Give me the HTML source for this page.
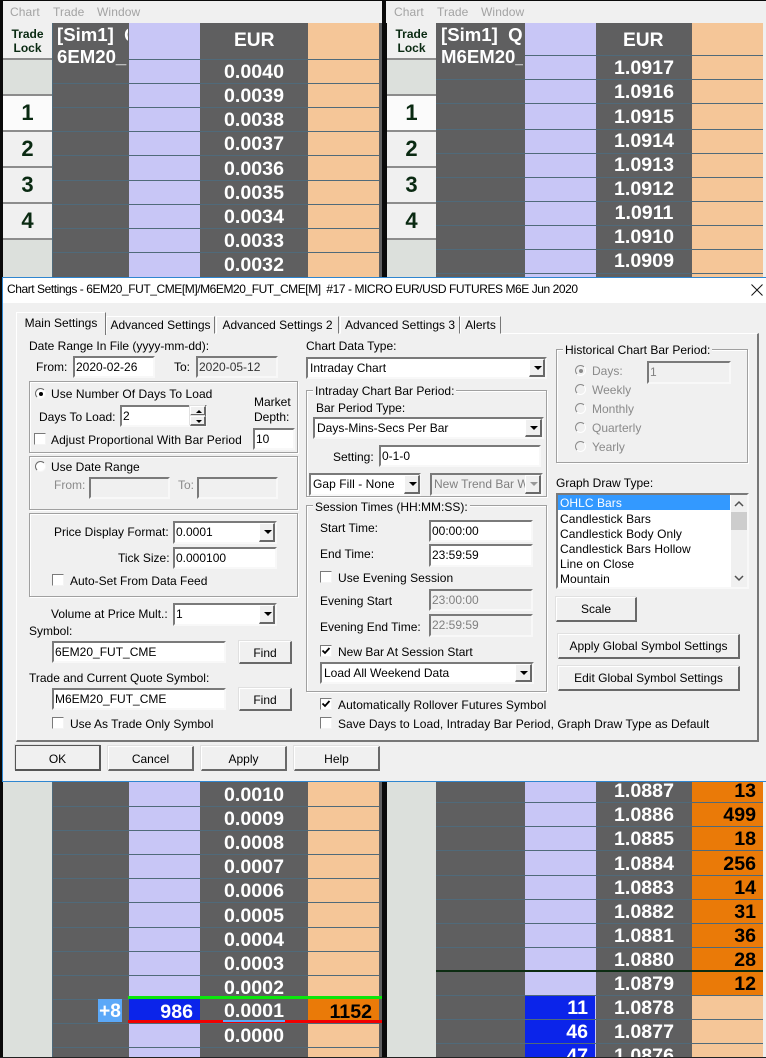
<!DOCTYPE html>
<html><head><meta charset="utf-8"><title>Chart Settings</title>
<style>
html,body{margin:0;padding:0;background:#0a0a0a;width:766px;height:1058px;overflow:hidden}
#r{position:relative;width:766px;height:1058px;overflow:hidden;font-family:"Liberation Sans",sans-serif;font-size:12px;color:#000}
#r div,#r span,#r b,#r i,#r svg{position:absolute;display:block;box-sizing:border-box}
.t{white-space:nowrap;line-height:14px;height:14px}
.w{letter-spacing:.06px}
.g{color:#8a8a8a}
.m{top:5px;color:#a3a3a3;font-size:12px;line-height:14px;letter-spacing:.1px;white-space:nowrap}
.tl{background:#f0f0f0;border-top:2px solid #8c8c8c}
.tlb{background:#dce0dc;border-top:2px solid #8c8c8c}
.n{font-weight:bold;font-size:22px;line-height:26px;color:#0a2a12;text-align:center;width:49px}
.l{height:1px;background:#506a7a}
.p{font-weight:bold;font-size:19.6px;line-height:26px;height:24px;color:#fff;text-align:center;width:100px;white-space:nowrap}
.h{font-weight:bold;font-size:19.2px;line-height:24px;color:#fff;white-space:nowrap}
.q{font-weight:bold;font-size:19.6px;line-height:26px;height:24px;text-align:right;white-space:nowrap}
.i{background:#fff;border:2px solid;border-color:#7a7a7a #f8f8f8 #f8f8f8 #7a7a7a;line-height:19px;padding-left:1px;white-space:nowrap;overflow:hidden}
.d{background:#f0f0f0;color:#808080}
.a{background:#f0f0f0;border:1px solid;border-color:#fff #696969 #696969 #fff;border-right-width:2px;border-bottom-width:2px}
.a:after{content:"";position:absolute;left:4px;top:6px;border:4px solid transparent;border-top:4px solid #000;border-bottom:0}
.ad:after{border-top-color:#999}
.gp{border:1px solid #a0a0a0;box-shadow:1px 1px 0 #fff,inset 1px 1px 0 #fff}
.lg{background:#f0f0f0;white-space:nowrap;line-height:14px;height:14px;padding:0 2px}
.b{background:#f0f0f0;border:1px solid;border-color:#fff #696969 #696969 #fff;border-right-width:2px;border-bottom-width:2px;box-shadow:-1px -1px 0 #e0e0e0;text-align:center;line-height:22px;white-space:nowrap}
.c{width:12px;height:12px;background:#fff;border:1px solid;border-color:#7a7a7a #f4f4f4 #f4f4f4 #7a7a7a}
.rd{width:11px;height:11px;border-radius:50%;background:#fff;border:1px solid;border-color:#6a6a6a #f6f6f6 #f6f6f6 #6a6a6a}
.rdd{background:#f0f0f0;border-color:#8a8a8a #fff #fff #8a8a8a}
.dot{left:3px;top:3px;width:4px;height:4px;border-radius:50%;background:#000}
.tab{background:#f0f0f0;border:1px solid;border-color:#fff #777 #f0f0f0 #fff;text-align:center;line-height:18px;white-space:nowrap}
.li{left:560px;white-space:nowrap;line-height:15px;height:15px;letter-spacing:.06px}
</style></head><body><div id="r">

<!-- left window -->
<div style="left:3px;top:1px;width:379px;height:22px;background:#f0f0f0"></div>
<div class="m" style="left:10px">Chart</div><div class="m" style="left:53px">Trade</div><div class="m" style="left:97px">Window</div>
<div style="left:3px;top:23px;width:49px;height:36px;background:#f0f0f0"></div>
<div class="t" style="left:3px;top:27px;width:49px;text-align:center;font-weight:bold;color:#0a2a12">Trade</div>
<div class="t" style="left:3px;top:41px;width:49px;text-align:center;font-weight:bold;color:#0a2a12">Lock</div>
<div class="tlb" style="left:3px;top:58px;width:49px;height:37px"></div>
<div class="tl" style="left:3px;top:94px;width:49px;height:37px;background:#fbfbfb"></div>
<div class="tl" style="left:3px;top:130px;width:49px;height:37px"></div>
<div class="tl" style="left:3px;top:166px;width:49px;height:37px"></div>
<div class="tl" style="left:3px;top:202px;width:49px;height:37px"></div>
<div class="tlb" style="left:3px;top:238px;width:49px;height:39px"></div>
<div class="n" style="left:3px;top:100px">1</div><div class="n" style="left:3px;top:136px">2</div><div class="n" style="left:3px;top:172px">3</div><div class="n" style="left:3px;top:208px">4</div>
<div style="left:52px;top:23px;width:77px;height:254px;background:#5f5f60;border-left:1px solid #506a7a"></div>
<div style="left:129px;top:23px;width:71px;height:254px;background:#c8c6f6"></div>
<div style="left:200px;top:23px;width:108px;height:254px;background:#5f5f60"></div>
<div style="left:308px;top:23px;width:71px;height:254px;background:#f5c698"></div>
<div style="left:379px;top:23px;width:3px;height:254px;background:#5f5f60"></div>
<div class="l" style="left:53px;width:326px;top:83px"></div><div class="l" style="left:53px;width:326px;top:107px"></div><div class="l" style="left:53px;width:326px;top:131px"></div><div class="l" style="left:53px;width:326px;top:155px"></div><div class="l" style="left:53px;width:326px;top:180px"></div><div class="l" style="left:53px;width:326px;top:204px"></div><div class="l" style="left:53px;width:326px;top:228px"></div><div class="l" style="left:53px;width:326px;top:252px"></div>
<div class="l" style="left:129px;width:250px;top:59px"></div>
<div style="left:53px;top:24px;width:75px;height:50px;overflow:hidden"><div class="h" style="left:4px;top:0;font-size:18.6px;line-height:22px">[Sim1]&nbsp; Q<br>6EM20_</div></div>
<div class="h" style="left:234px;top:29px">EUR</div>
<div class="p" style="left:204px;top:59px">0.0040</div><div class="p" style="left:204px;top:83px">0.0039</div><div class="p" style="left:204px;top:107px">0.0038</div><div class="p" style="left:204px;top:131px">0.0037</div><div class="p" style="left:204px;top:156px">0.0036</div><div class="p" style="left:204px;top:180px">0.0035</div><div class="p" style="left:204px;top:204px">0.0034</div><div class="p" style="left:204px;top:228px">0.0033</div><div class="p" style="left:204px;top:252px">0.0032</div>

<!-- right window -->
<div style="left:386px;top:1px;width:380px;height:22px;background:#f0f0f0"></div>
<div class="m" style="left:394px">Chart</div><div class="m" style="left:437px">Trade</div><div class="m" style="left:481px">Window</div>
<div style="left:387px;top:23px;width:49px;height:36px;background:#f0f0f0"></div>
<div class="t" style="left:387px;top:27px;width:49px;text-align:center;font-weight:bold;color:#0a2a12">Trade</div>
<div class="t" style="left:387px;top:41px;width:49px;text-align:center;font-weight:bold;color:#0a2a12">Lock</div>
<div class="tlb" style="left:387px;top:58px;width:49px;height:37px"></div>
<div class="tl" style="left:387px;top:94px;width:49px;height:37px;background:#fbfbfb"></div>
<div class="tl" style="left:387px;top:130px;width:49px;height:37px"></div>
<div class="tl" style="left:387px;top:166px;width:49px;height:37px"></div>
<div class="tl" style="left:387px;top:202px;width:49px;height:37px"></div>
<div class="tlb" style="left:387px;top:238px;width:49px;height:39px"></div>
<div class="n" style="left:387px;top:100px">1</div><div class="n" style="left:387px;top:136px">2</div><div class="n" style="left:387px;top:172px">3</div><div class="n" style="left:387px;top:208px">4</div>
<div style="left:436px;top:23px;width:89px;height:254px;background:#5f5f60"></div>
<div style="left:525px;top:23px;width:71px;height:254px;background:#c8c6f6"></div>
<div style="left:596px;top:23px;width:96px;height:254px;background:#5f5f60"></div>
<div style="left:692px;top:23px;width:71px;height:254px;background:#f5c698"></div>
<div style="left:763px;top:23px;width:3px;height:254px;background:#f0f0f0"></div>
<div class="l" style="left:436px;width:327px;top:79px"></div><div class="l" style="left:436px;width:327px;top:103px"></div><div class="l" style="left:436px;width:327px;top:129px"></div><div class="l" style="left:436px;width:327px;top:153px"></div><div class="l" style="left:436px;width:327px;top:177px"></div><div class="l" style="left:436px;width:327px;top:201px"></div><div class="l" style="left:436px;width:327px;top:225px"></div><div class="l" style="left:436px;width:327px;top:249px"></div><div class="l" style="left:436px;width:327px;top:273px"></div>
<div class="l" style="left:525px;width:238px;top:55px"></div>
<div style="left:437px;top:24px;width:86px;height:50px;overflow:hidden"><div class="h" style="left:4px;top:0;font-size:18.6px;line-height:22px">[Sim1]&nbsp; Q<br>M6EM20_</div></div>
<div class="h" style="left:623px;top:29px">EUR</div>
<div class="p" style="left:594px;top:55px">1.0917</div><div class="p" style="left:594px;top:79px">1.0916</div><div class="p" style="left:594px;top:104px">1.0915</div><div class="p" style="left:594px;top:128px">1.0914</div><div class="p" style="left:594px;top:152px">1.0913</div><div class="p" style="left:594px;top:176px">1.0912</div><div class="p" style="left:594px;top:200px">1.0911</div><div class="p" style="left:594px;top:224px">1.0910</div><div class="p" style="left:594px;top:248px">1.0909</div>

<!-- bottom left -->
<div style="left:3px;top:782px;width:49px;height:275px;background:#dce0dc"></div>
<div style="left:52px;top:782px;width:77px;height:275px;background:#5f5f60;border-left:1px solid #506a7a"></div>
<div style="left:129px;top:782px;width:71px;height:275px;background:#c8c6f6"></div>
<div style="left:200px;top:782px;width:108px;height:275px;background:#5f5f60"></div>
<div style="left:308px;top:782px;width:71px;height:275px;background:#f5c698"></div>
<div style="left:379px;top:782px;width:3px;height:275px;background:#5f5f60"></div>
<div class="l" style="left:53px;width:326px;top:806px"></div><div class="l" style="left:53px;width:326px;top:830px"></div><div class="l" style="left:53px;width:326px;top:854px"></div><div class="l" style="left:53px;width:326px;top:878px"></div><div class="l" style="left:53px;width:326px;top:902px"></div><div class="l" style="left:53px;width:326px;top:927px"></div><div class="l" style="left:53px;width:326px;top:951px"></div><div class="l" style="left:53px;width:326px;top:975px"></div><div class="l" style="left:53px;width:76px;top:999px"></div><div class="l" style="left:53px;width:326px;top:1023px"></div><div class="l" style="left:53px;width:326px;top:1047px"></div>
<div class="p" style="left:204px;top:782px">0.0010</div><div class="p" style="left:204px;top:806px">0.0009</div><div class="p" style="left:204px;top:830px">0.0008</div><div class="p" style="left:204px;top:854px">0.0007</div><div class="p" style="left:204px;top:878px">0.0006</div><div class="p" style="left:204px;top:903px">0.0005</div><div class="p" style="left:204px;top:927px">0.0004</div><div class="p" style="left:204px;top:951px">0.0003</div><div class="p" style="left:204px;top:975px">0.0002</div>
<div style="left:200px;top:999px;width:108px;height:24px;background:#5f5f60"></div>
<div class="p" style="left:204px;top:998px">0.0001</div><div class="p" style="left:204px;top:1023px">0.0000</div>
<div style="left:129px;top:999px;width:71px;height:21px;background:#0b24ea"></div>
<div style="left:308px;top:999px;width:71px;height:21px;background:#ea7a08"></div>
<div class="q" style="left:129px;top:999px;width:64px;color:#fff">986</div>
<div class="q" style="left:308px;top:999px;width:64px;color:#000">1152</div>
<div style="left:98px;top:999px;width:24px;height:23px;background:#5ba8f8;color:#fff;font-weight:bold;font-size:19px;line-height:25px;text-align:center">+8</div>
<div style="left:128px;top:996px;width:254px;height:3px;background:#0be60b"></div>
<div style="left:128px;top:1020px;width:254px;height:3px;background:#f00000"></div>
<div style="left:223px;top:1020px;width:62px;height:2px;background:#5ba8f8"></div>

<!-- bottom right -->
<div style="left:387px;top:782px;width:49px;height:275px;background:#dce0dc"></div>
<div style="left:436px;top:782px;width:89px;height:275px;background:#5f5f60"></div>
<div style="left:525px;top:782px;width:71px;height:275px;background:#c8c6f6"></div>
<div style="left:596px;top:782px;width:96px;height:275px;background:#5f5f60"></div>
<div style="left:692px;top:782px;width:71px;height:213px;background:#ea7a08"></div>
<div style="left:692px;top:995px;width:71px;height:62px;background:#f5c698"></div>
<div style="left:525px;top:995px;width:70px;height:62px;background:#0b24ea"></div>
<div style="left:763px;top:782px;width:3px;height:275px;background:#f0f0f0"></div>
<div class="l" style="left:436px;width:327px;top:802px"></div><div class="l" style="left:436px;width:327px;top:826px"></div><div class="l" style="left:436px;width:327px;top:850px"></div><div class="l" style="left:436px;width:327px;top:875px"></div><div class="l" style="left:436px;width:327px;top:899px"></div><div class="l" style="left:436px;width:327px;top:923px"></div><div class="l" style="left:436px;width:327px;top:947px"></div><div class="l" style="left:436px;width:327px;top:995px"></div><div class="l" style="left:436px;width:327px;top:1019px"></div><div class="l" style="left:436px;width:327px;top:1043px"></div>
<div style="left:436px;top:970px;width:327px;height:2px;background:#0c2c12"></div>
<div class="p" style="left:594px;top:778px">1.0887</div><div class="p" style="left:594px;top:802px">1.0886</div><div class="p" style="left:594px;top:826px">1.0885</div><div class="p" style="left:594px;top:851px">1.0884</div><div class="p" style="left:594px;top:875px">1.0883</div><div class="p" style="left:594px;top:899px">1.0882</div><div class="p" style="left:594px;top:923px">1.0881</div><div class="p" style="left:594px;top:947px">1.0880</div><div class="p" style="left:594px;top:971px">1.0879</div><div class="p" style="left:594px;top:995px">1.0878</div><div class="p" style="left:594px;top:1019px">1.0877</div><div class="p" style="left:594px;top:1043px">1.0876</div>
<div class="q" style="left:692px;top:778px;width:64px">13</div><div class="q" style="left:692px;top:802px;width:64px">499</div><div class="q" style="left:692px;top:826px;width:64px">18</div><div class="q" style="left:692px;top:851px;width:64px">256</div><div class="q" style="left:692px;top:875px;width:64px">14</div><div class="q" style="left:692px;top:899px;width:64px">31</div><div class="q" style="left:692px;top:923px;width:64px">36</div><div class="q" style="left:692px;top:947px;width:64px">28</div><div class="q" style="left:692px;top:971px;width:64px">12</div>
<div class="q" style="left:525px;top:995px;width:63px;color:#fff">11</div><div class="q" style="left:525px;top:1019px;width:63px;color:#fff">46</div><div class="q" style="left:525px;top:1043px;width:63px;color:#fff">47</div>
<div style="left:0;top:1057px;width:766px;height:1px;background:#222"></div>

<!-- dialog -->
<div style="left:2px;top:277px;width:764px;height:505px;background:#f0f0f0;border:1px solid #2f86d0;border-right:0"></div>
<div style="left:3px;top:278px;width:763px;height:25px;background:#fff"></div>
<div class="t" style="left:7px;top:282px;letter-spacing:-.44px">Chart Settings - 6EM20_FUT_CME[M]/M6EM20_FUT_CME[M]&nbsp; #17 - MICRO EUR/USD FUTURES M6E Jun 2020</div>
<svg style="left:751px;top:284px" width="12" height="12" viewBox="0 0 12 12"><path d="M.5.5l11 11M11.5.5l-11 11" stroke="#111" stroke-width="1" fill="none"/></svg>

<!-- tab pane -->
<div style="left:16px;top:333px;width:743px;height:409px;border:1px solid;border-color:#fff #777 #777 #fff;border-right-width:2px;border-bottom-width:2px"></div>
<div class="tab" style="left:106px;top:316px;width:109px;height:18px;line-height:17px">Advanced Settings</div>
<div class="tab" style="left:216px;top:316px;width:123px;height:18px;line-height:17px">Advanced Settings 2</div>
<div class="tab" style="left:340px;top:316px;width:120px;height:18px;line-height:17px">Advanced Settings 3</div>
<div class="tab" style="left:460px;top:316px;width:41px;height:18px;line-height:17px">Alerts</div>
<div class="tab" style="left:16px;top:312px;width:90px;height:23px;line-height:20px;border-bottom:0">Main Settings</div>

<!-- left column -->
<div class="t" style="left:29px;top:339px">Date Range In File (yyyy-mm-dd):</div>
<div class="t" style="left:36px;top:360px">From:</div>
<div class="i" style="left:73px;top:356px;width:82px;height:22px">2020-02-26</div>
<div class="t" style="left:174px;top:360px">To:</div>
<div class="i d" style="left:196px;top:356px;width:82px;height:22px;color:#333">2020-05-12</div>

<div class="gp" style="left:29px;top:381px;width:269px;height:72px"></div>
<div class="rd" style="left:35px;top:388px"><b class="dot"></b></div>
<div class="t w" style="left:51px;top:387px">Use Number Of Days To Load</div>
<div class="t" style="left:39px;top:410px">Days To Load:</div>
<div class="i" style="left:120px;top:405px;width:87px;height:22px">2</div>
<div class="b" style="left:190px;top:406px;width:16px;height:10px;font-size:1px;line-height:1px"><i style="left:5px;top:3px;border:3px solid transparent;border-bottom:3px solid #000;border-top:0"></i></div>
<div class="b" style="left:190px;top:416px;width:16px;height:10px;font-size:1px;line-height:1px"><i style="left:5px;top:3px;border:3px solid transparent;border-top:3px solid #000;border-bottom:0"></i></div>
<div class="t" style="left:254px;top:395px">Market</div>
<div class="t" style="left:254px;top:410px">Depth:</div>
<div class="i" style="left:253px;top:428px;width:42px;height:22px">10</div>
<div class="c" style="left:34px;top:433px"></div>
<div class="t w" style="left:51px;top:433px">Adjust Proportional With Bar Period</div>

<div class="gp" style="left:29px;top:456px;width:269px;height:54px"></div>
<div class="rd" style="left:35px;top:461px"></div>
<div class="t" style="left:51px;top:460px">Use Date Range</div>
<div class="t g" style="left:54px;top:478px">From:</div>
<div class="i d" style="left:89px;top:477px;width:81px;height:22px"></div>
<div class="t g" style="left:178px;top:478px">To:</div>
<div class="i d" style="left:197px;top:477px;width:81px;height:22px"></div>

<div class="gp" style="left:29px;top:513px;width:269px;height:84px"></div>
<div class="t" style="left:54px;top:525px">Price Display Format:</div>
<div class="i" style="left:173px;top:521px;width:104px;height:23px">0.0001</div><div class="a" style="left:259px;top:523px;width:16px;height:19px"></div>
<div class="t" style="left:118px;top:551px">Tick Size:</div>
<div class="i" style="left:173px;top:547px;width:104px;height:22px">0.000100</div>
<div class="c" style="left:52px;top:574px"></div>
<div class="t" style="left:70px;top:574px">Auto-Set From Data Feed</div>

<div class="t" style="left:51px;top:607px">Volume at Price Mult.:</div>
<div class="i" style="left:173px;top:603px;width:104px;height:23px">1</div><div class="a" style="left:259px;top:605px;width:16px;height:19px"></div>
<div class="t" style="left:29px;top:624px">Symbol:</div>
<div class="i" style="left:52px;top:641px;width:174px;height:22px">6EM20_FUT_CME</div>
<div class="b" style="left:239px;top:641px;width:53px;height:23px">Find</div>
<div class="t" style="left:29px;top:671px">Trade and Current Quote Symbol:</div>
<div class="i" style="left:52px;top:688px;width:174px;height:22px">M6EM20_FUT_CME</div>
<div class="b" style="left:239px;top:688px;width:53px;height:23px">Find</div>
<div class="c" style="left:52px;top:717px"></div>
<div class="t" style="left:70px;top:717px">Use As Trade Only Symbol</div>

<!-- middle column -->
<div class="t" style="left:306px;top:339px">Chart Data Type:</div>
<div class="i" style="left:306px;top:357px;width:241px;height:22px;padding-left:2px">Intraday Chart</div><div class="a" style="left:529px;top:359px;width:16px;height:18px"></div>
<div class="gp" style="left:306px;top:390px;width:241px;height:107px"></div>
<div class="lg" style="left:313px;top:384px">Intraday Chart Bar Period:</div>
<div class="t" style="left:316px;top:401px">Bar Period Type:</div>
<div class="i" style="left:313px;top:417px;width:231px;height:22px;padding-left:2px">Days-Mins-Secs Per Bar</div><div class="a" style="left:525px;top:419px;width:17px;height:18px"></div>
<div class="t" style="left:333px;top:450px">Setting:</div>
<div class="i" style="left:379px;top:445px;width:162px;height:22px">0-1-0</div>
<div class="i" style="left:309px;top:473px;width:112px;height:23px;padding-left:2px;letter-spacing:.06px">Gap Fill - None</div><div class="a" style="left:404px;top:475px;width:16px;height:19px"></div>
<div class="i d" style="left:430px;top:473px;width:113px;height:23px;background:#f0f0f0;padding-left:2px">New Trend Bar W</div><div class="a ad" style="left:525px;top:475px;width:16px;height:19px"></div>

<div class="gp" style="left:306px;top:505px;width:241px;height:187px"></div>
<div class="lg" style="left:313px;top:500px">Session Times (HH:MM:SS):</div>
<div class="t" style="left:320px;top:521px">Start Time:</div>
<div class="i" style="left:429px;top:520px;width:104px;height:22px">00:00:00</div>
<div class="t" style="left:320px;top:547px">End Time:</div>
<div class="i" style="left:429px;top:544px;width:104px;height:23px">23:59:59</div>
<div class="c" style="left:320px;top:571px"></div>
<div class="t w" style="left:338px;top:571px">Use Evening Session</div>
<div class="t" style="left:320px;top:594px">Evening Start</div>
<div class="i d" style="left:429px;top:589px;width:104px;height:22px">23:00:00</div>
<div class="t" style="left:320px;top:620px">Evening End Time:</div>
<div class="i d" style="left:429px;top:614px;width:104px;height:23px">22:59:59</div>
<div class="c" style="left:320px;top:645px"><svg style="left:0;top:0" width="10" height="10" viewBox="0 0 10 10"><path d="M1.5 4.5l2.5 2.5 4.500-5" stroke="#000" stroke-width="1.800" fill="none"/></svg></div>
<div class="t" style="left:338px;top:645px">New Bar At Session Start</div>
<div class="i" style="left:320px;top:662px;width:214px;height:22px;padding-left:2px">Load All Weekend Data</div><div class="a" style="left:515px;top:664px;width:17px;height:18px"></div>
<div class="c" style="left:320px;top:698px"><svg style="left:0;top:0" width="10" height="10" viewBox="0 0 10 10"><path d="M1.5 4.5l2.5 2.5 4.500-5" stroke="#000" stroke-width="1.800" fill="none"/></svg></div>
<div class="t w" style="left:338px;top:698px">Automatically Rollover Futures Symbol</div>
<div class="c" style="left:320px;top:717px"></div>
<div class="t" style="left:338px;top:717px;letter-spacing:.03px">Save Days to Load, Intraday Bar Period, Graph Draw Type as Default</div>

<!-- right column -->
<div class="gp" style="left:556px;top:349px;width:192px;height:114px"></div>
<div class="lg" style="left:563px;top:343px">Historical Chart Bar Period:</div>
<div class="rd rdd" style="left:575px;top:365px"><b class="dot" style="background:#8a8a8a"></b></div><div class="t g" style="left:592px;top:364px">Days:</div>
<div class="i d" style="left:647px;top:361px;width:84px;height:23px">1</div>
<div class="rd rdd" style="left:575px;top:384px"></div><div class="t g" style="left:592px;top:383px">Weekly</div>
<div class="rd rdd" style="left:575px;top:403px"></div><div class="t g" style="left:592px;top:402px">Monthly</div>
<div class="rd rdd" style="left:575px;top:422px"></div><div class="t g" style="left:592px;top:421px">Quarterly</div>
<div class="rd rdd" style="left:575px;top:441px"></div><div class="t g" style="left:592px;top:440px">Yearly</div>
<div class="t" style="left:556px;top:476px">Graph Draw Type:</div>
<div style="left:556px;top:493px;width:193px;height:96px;background:#fff;border:2px solid;border-color:#7a7a7a #f8f8f8 #f8f8f8 #7a7a7a"></div>
<div style="left:558px;top:495px;width:172px;height:15px;background:#3399ff"></div>
<div class="li" style="top:496px;color:#fff">OHLC Bars</div>
<div class="li" style="top:512px">Candlestick Bars</div>
<div class="li" style="top:527px">Candlestick Body Only</div>
<div class="li" style="top:542px">Candlestick Bars Hollow</div>
<div class="li" style="top:557px">Line on Close</div>
<div class="li" style="top:572px">Mountain</div>
<div style="left:731px;top:495px;width:16px;height:92px;background:#f0f0f0"></div>
<div style="left:731px;top:512px;width:16px;height:18px;background:#cdcdcd"></div>
<svg style="left:733px;top:500px" width="12" height="8" viewBox="0 0 12 8"><path d="M2 6l4-4 4 4" stroke="#505050" stroke-width="1.500" fill="none"/></svg>
<svg style="left:733px;top:574px" width="12" height="8" viewBox="0 0 12 8"><path d="M2 2l4 4 4-4" stroke="#505050" stroke-width="1.500" fill="none"/></svg>
<div class="b" style="left:556px;top:597px;width:81px;height:25px">Scale</div>
<div class="b" style="left:558px;top:634px;width:182px;height:25px">Apply Global Symbol Settings</div>
<div class="b" style="left:558px;top:666px;width:182px;height:25px">Edit Global Symbol Settings</div>

<!-- bottom buttons -->
<div class="b" style="left:15px;top:745px;width:86px;height:26px;border:1px solid #555;border-right-width:2px;border-bottom-width:2px;line-height:26px">OK</div>
<div class="b" style="left:108px;top:746px;width:86px;height:25px;line-height:24px">Cancel</div>
<div class="b" style="left:201px;top:746px;width:86px;height:25px;line-height:24px">Apply</div>
<div class="b" style="left:294px;top:746px;width:86px;height:25px;line-height:24px">Help</div>

</div></body></html>
